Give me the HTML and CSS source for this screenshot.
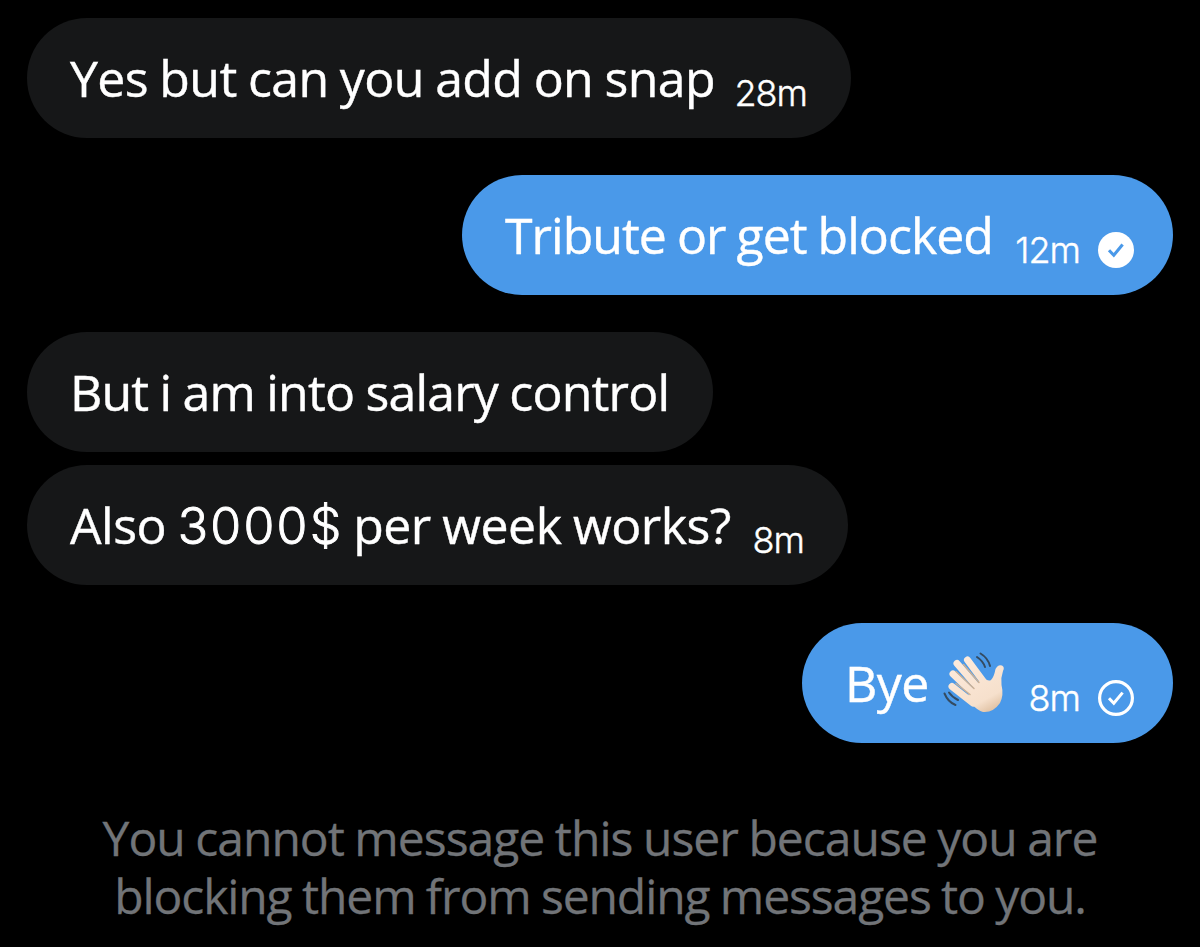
FILE: index.html
```html
<!DOCTYPE html>
<html lang="en"><head><meta charset="utf-8"><title>Messages</title><link rel="stylesheet" href="styles.css"></head>
<body>
<main class="chat">
<div class="bubble received m1"><span class="text">Yes but can you add on snap</span><time class="time">28m</time></div>
<div class="bubble sent m2"><span class="text">Tribute or get blocked</span><time class="time">12m</time>
<svg class="status" viewBox="0 0 36 36"><circle cx="18" cy="18" r="18" fill="#fff"/><path d="M11 18.2l4.8 5L24.6 12.6" fill="none" stroke="#4a99e9" stroke-width="3.1"/></svg></div>
<div class="bubble received m3"><span class="text">But i am into salary control</span></div>
<div class="bubble received m4"><span class="text">Also <span class="amount">3000$</span> per week works?</span><time class="time">8m</time></div>
<div class="bubble sent m5"><span class="text">Bye</span>
<svg class="wave" viewBox="0 0 64 64"><defs><linearGradient id="skin" gradientUnits="userSpaceOnUse" x1="18" y1="8" x2="48" y2="62"><stop offset="0" stop-color="#fdeadb"/><stop offset=".75" stop-color="#f6e0cc"/><stop offset="1" stop-color="#dcbc9c"/></linearGradient></defs>
<g stroke="url(#skin)" stroke-width="7" stroke-linecap="round" fill="none">
<path d="M9 34.500L30 51"/><path d="M10 22L32 43"/><path d="M14 11.500L36 37"/><path d="M24.500 8L43 33"/></g>
<path d="M26 41L40 25Q45 30 48 28Q51 25 52.500 17Q55 12 59 13.500Q62 15 60 19Q57.500 26 58.500 33Q61 43 57 51Q50 61 40 60Q35 59 24 48Z" fill="url(#skin)"/>
<path d="M13 31.500L27 42.500M13 19.500L31 36.500M20.500 12.500L36 30.500" stroke="#cbb196" stroke-width="1.500" stroke-linecap="round" fill="none"/>
<path d="M34 5Q40 9 42 15M37.500 1.500Q45 6 47 14M6 40.500Q9 45 15 48M1.500 41.500Q5 50 12.500 53" fill="none" stroke="#344b61" stroke-width="2" stroke-linecap="round"/></svg>
<time class="time">8m</time>
<svg class="status" viewBox="0 0 36 36"><circle cx="18" cy="18" r="16.400" fill="none" stroke="#fff" stroke-width="3.200"/><path d="M11 18.200l4.800 5L24.600 12.600" fill="none" stroke="#fff" stroke-width="3"/></svg></div>
<p class="notice"><span class="l1">You cannot message this user because you are</span><br><span class="l2">blocking them from sending messages to you.</span></p>
</main>
</body></html>
```
FILE: styles.css
```css
body{margin:0;background:#000;font-family:"Open Sans",sans-serif;color:#fff}
.chat{box-sizing:border-box;height:947px;padding:18px 27px 0;display:flex;flex-direction:column;overflow:hidden}
.bubble{box-sizing:border-box;height:120px;flex:none;display:flex;padding:0 43px;border-radius:60px;white-space:nowrap}
.received{align-self:flex-start;background:#161718}
.sent{align-self:flex-end;background:#4a99e9;padding-right:39px}
.m1{width:824px}
.m2{width:711px}
.m3{width:686px}
.m4{width:821px}
.m5{width:371px}
.m2,.m3,.m5{margin-top:37px}
.m4{margin-top:13px}
.m5{margin-top:38px}
.text{font-size:50px;line-height:120px;word-spacing:-1px;-webkit-text-stroke:.4px currentColor}
.m1 .text{letter-spacing:-.62px}
.m2 .text{letter-spacing:-.98px}
.m3 .text{letter-spacing:-.8px}
.m4 .text{letter-spacing:-.5px}
.m5 .text{letter-spacing:-.5px}
.text .amount{font-family:Inter,sans-serif;font-size:50px;font-weight:300;line-height:1;letter-spacing:2.3px;margin-right:-2px;-webkit-text-stroke:.9px currentColor}
.time{font-family:Inter,sans-serif;font-size:36px;font-weight:300;line-height:120px;padding-top:15px;margin-left:auto;letter-spacing:-1px;margin-right:-1px;-webkit-text-stroke:.4px currentColor}
.received .time{margin-right:1px}
.status{width:36px;height:36px;margin:57px 0 0 19px}
.wave{width:64px;height:64px;margin:29px 0 0 14px}
.notice{margin:66px 0 0;text-align:center;color:#717478;font-size:48px;line-height:58px;word-spacing:-1px;white-space:nowrap;-webkit-text-stroke:.3px currentColor}
.l1{letter-spacing:-.98px}
.l2{letter-spacing:-1.1px}
```
